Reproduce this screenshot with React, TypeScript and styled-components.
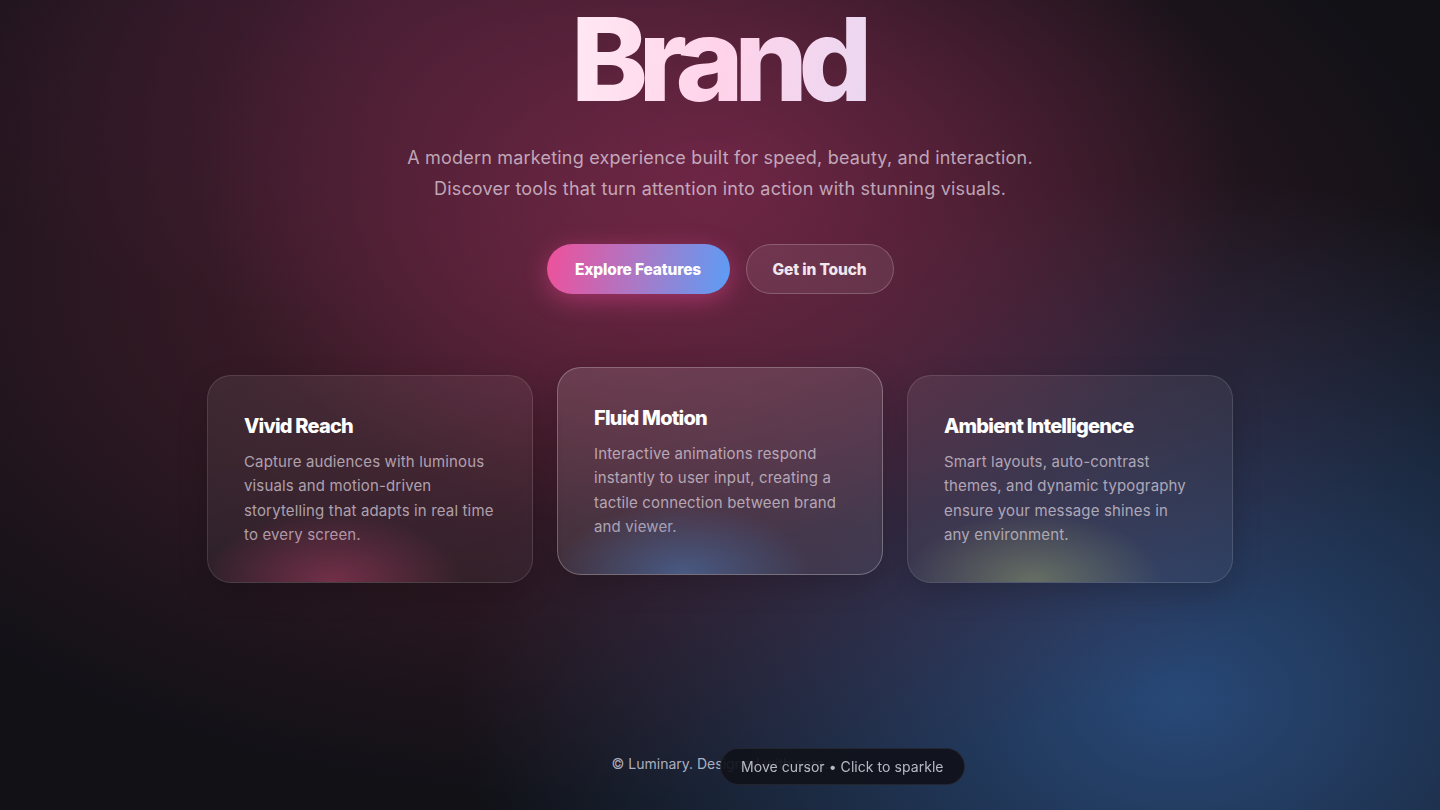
import styled, { createGlobalStyle, css } from 'styled-components';

const GlobalStyle = createGlobalStyle`
  * { box-sizing: border-box; }
  html, body {
    margin: 0;
    padding: 0;
    min-height: 100%;
  }
  body {
    font-family: Inter, "Noto Sans", sans-serif;
    color: #f4eef4;
    background-color: #111116;
    background-image:
      radial-gradient(ellipse 520px 360px at 720px 180px, rgba(128, 42, 80, 0.7), rgba(128, 42, 80, 0) 100%),
      radial-gradient(ellipse 880px 520px at 600px 280px, rgba(104, 38, 60, 0.72), rgba(104, 38, 60, 0) 100%),
      radial-gradient(ellipse 720px 520px at 1180px 700px, rgba(44, 82, 136, 0.85), rgba(44, 82, 136, 0) 100%),
      radial-gradient(ellipse 520px 320px at 380px 0px, rgba(72, 30, 60, 0.6), rgba(72, 30, 60, 0) 100%);
    min-height: 100vh;
    overflow: hidden;
  }
`;

const Page = styled.div`
  min-height: 100vh;
  display: flex;
  flex-direction: column;
  align-items: center;
`;

const Hero = styled.main`
  display: flex;
  flex-direction: column;
  align-items: center;
  text-align: center;
  padding-top: 1px;
`;

/* negative tracking pushes the last glyph past the box, so pad the right side
   to keep the clipped gradient covering it */
const Title = styled.h1`
  margin: 0;
  padding: 0 10px 0 4px;
  font-family: Inter, "Noto Sans", sans-serif;
  font-weight: 800;
  font-size: 116px;
  line-height: 1;
  letter-spacing: -0.082em;
  background: linear-gradient(100deg, #ffe9f3 0%, #ffd3ea 50%, #ead8f2 100%);
  -webkit-background-clip: text;
  background-clip: text;
  -webkit-text-fill-color: transparent;
`;

const Lead = styled.p`
  margin: 25px 0 0;
  font-size: 18px;
  line-height: 31px;
  letter-spacing: 0.011em;
  color: rgba(232, 220, 232, 0.72);
`;

const Actions = styled.div`
  display: flex;
  gap: 16px;
  margin-top: 40px;
`;

const Button = styled.button<{ $primary?: boolean }>`
  height: 50px;
  border-radius: 999px;
  font-family: Inter, "Noto Sans", sans-serif;
  font-weight: 800;
  font-size: 15.5px;
  letter-spacing: -0.01em;
  color: #fff;
  cursor: pointer;
  ${({ $primary }) =>
    $primary
      ? css`
          width: 183px;
          border: none;
          background: linear-gradient(100deg, #f0509a 0%, #a77ac8 52%, #5b9df6 100%);
          box-shadow: 0 6px 24px rgba(236, 72, 153, 0.45);
        `
      : css`
          width: 148px;
          border: 1px solid rgba(255, 255, 255, 0.2);
          background: rgba(255, 255, 255, 0.08);
          color: #f1e6ee;
        `}
`;

const Cards = styled.section`
  display: grid;
  grid-template-columns: repeat(3, 326px);
  gap: 24px;
  margin-top: 81px;
  align-items: start;
`;

const glowColors = {
  pink: 'rgba(214, 70, 120, 0.4)',
  blue: 'rgba(80, 130, 200, 0.48)',
  olive: 'rgba(170, 180, 110, 0.42)',
};

const Card = styled.article<{ $glow: keyof typeof glowColors; $raised?: boolean }>`
  position: relative;
  overflow: hidden;
  height: 208px;
  padding: 36px 36px 0;
  text-align: left;
  border-radius: 24px;
  background: ${({ $raised }) =>
    $raised
      ? 'linear-gradient(160deg, rgba(255,255,255,0.13), rgba(255,255,255,0.07))'
      : 'linear-gradient(160deg, rgba(255,255,255,0.07), rgba(255,255,255,0.04))'};
  border: 1px solid ${({ $raised }) => ($raised ? 'rgba(255,255,255,0.26)' : 'rgba(255,255,255,0.12)')};
  transform: translateY(${({ $raised }) => ($raised ? '-8px' : '0')});
  box-shadow: 0 10px 30px rgba(0, 0, 0, 0.18);

  &::after {
    content: '';
    position: absolute;
    left: -5px;
    bottom: -70px;
    width: 260px;
    height: 140px;
    border-radius: 50%;
    background: radial-gradient(closest-side, ${({ $glow }) => glowColors[$glow]}, transparent);
    pointer-events: none;
  }
`;

const CardTitle = styled.h3`
  position: relative;
  margin: 0;
  font-family: Inter, "Noto Sans", sans-serif;
  font-weight: 800;
  font-size: 20px;
  line-height: 28px;
  letter-spacing: -0.04em;
  color: #ffffff;
`;

const CardText = styled.p`
  position: relative;
  max-width: 252px;
  margin: 10px 0 0;
  font-size: 15px;
  line-height: 24.4px;
  letter-spacing: 0.01em;
  color: rgba(226, 218, 228, 0.7);
`;

const Footer = styled.footer`
  margin-top: auto;
  padding-bottom: 38px;
  font-size: 14px;
  color: rgba(210, 214, 226, 0.8);
`;

const Hint = styled.div`
  position: fixed;
  left: 50%;
  bottom: 25px;
  height: 37px;
  padding: 0 20px;
  display: flex;
  align-items: center;
  border-radius: 999px;
  background: rgba(16, 17, 26, 0.92);
  border: 1px solid rgba(255, 255, 255, 0.08);
  font-size: 14px;
  letter-spacing: 0.004em;
  color: rgba(214, 214, 224, 0.85);
  white-space: nowrap;
`;

const features = [
  {
    title: 'Vivid Reach',
    text: 'Capture audiences with luminous visuals and motion-driven storytelling that adapts in real time to every screen.',
    glow: 'pink' as const,
  },
  {
    title: 'Fluid Motion',
    text: 'Interactive animations respond instantly to user input, creating a tactile connection between brand and viewer.',
    glow: 'blue' as const,
    raised: true,
  },
  {
    title: 'Ambient Intelligence',
    text: 'Smart layouts, auto-contrast themes, and dynamic typography ensure your message shines in any environment.',
    glow: 'olive' as const,
  },
];

export default function App() {
  return (
    <>
      <GlobalStyle />
      <Page>
        <Hero>
          <Title>Brand</Title>
          <Lead>
            A modern marketing experience built for speed, beauty, and interaction.
            <br />
            Discover tools that turn attention into action with stunning visuals.
          </Lead>
          <Actions>
            <Button $primary>Explore Features</Button>
            <Button>Get in Touch</Button>
          </Actions>
          <Cards>
            {features.map((f) => (
              <Card key={f.title} $glow={f.glow} $raised={f.raised}>
                <CardTitle>{f.title}</CardTitle>
                <CardText>{f.text}</CardText>
              </Card>
            ))}
          </Cards>
        </Hero>
        <Footer>© Luminary. Designed with care.</Footer>
      </Page>
      <Hint>Move cursor • Click to sparkle</Hint>
    </>
  );
}
